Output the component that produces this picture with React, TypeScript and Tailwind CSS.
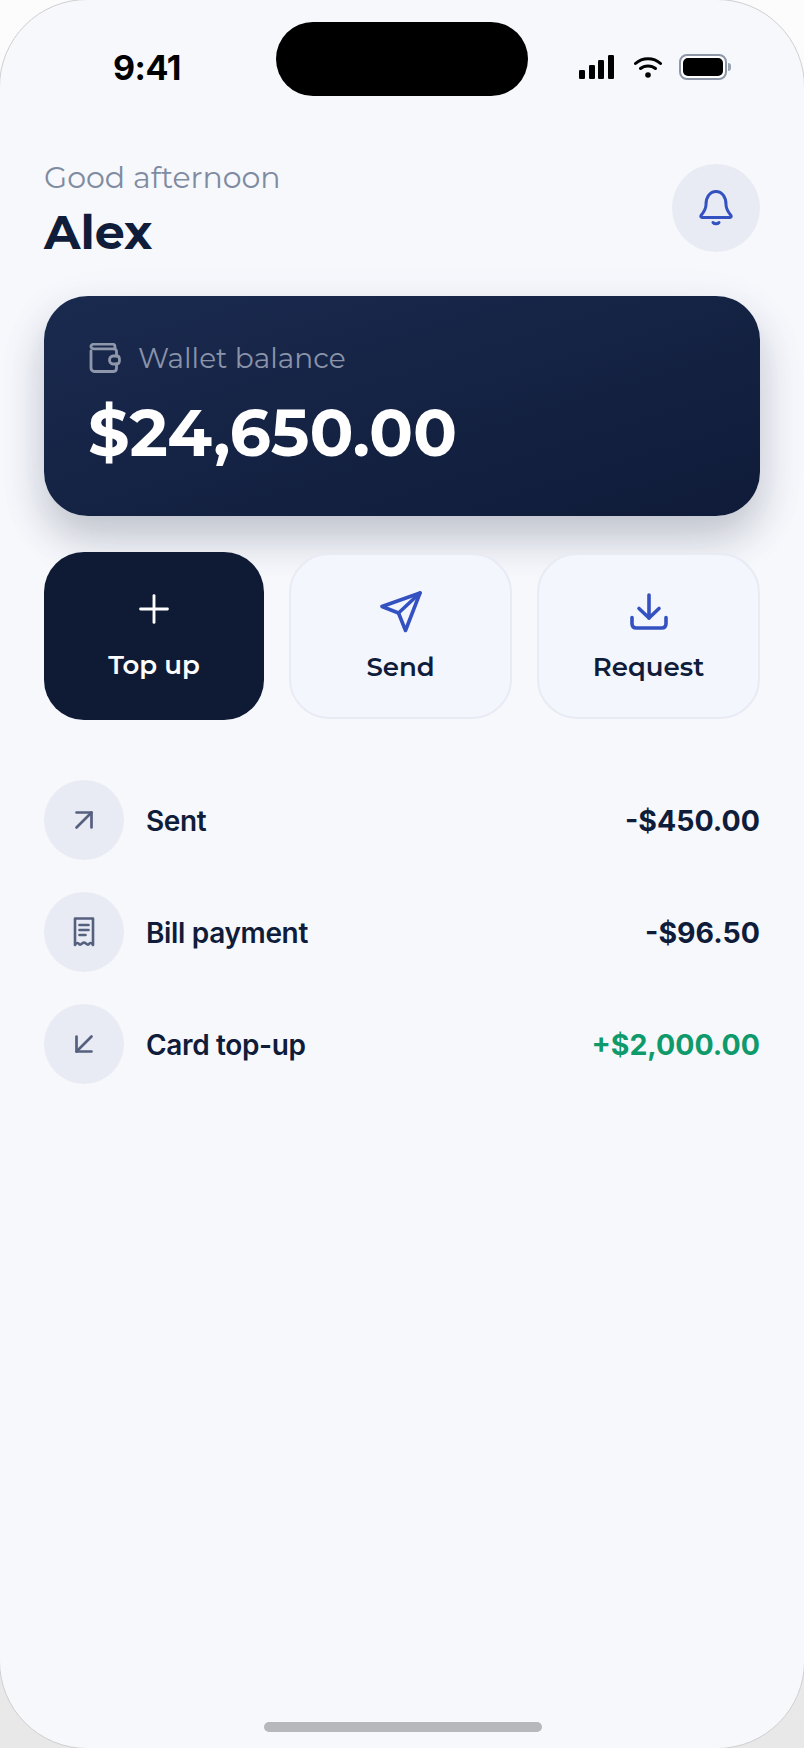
import { ArrowDownLeft, ArrowUpRight, Plus } from "lucide-react";
import type { ReactNode } from "react";

const display = "font-['Montserrat','Inter',sans-serif]";

function StatusIcons() {
  return (
    <div className="flex items-center pr-[29px]">
      <svg width="36" height="24" viewBox="0 0 36 24" className="mr-[19px]">
        <rect x="0" y="15" width="6" height="9" rx="1.2" />
        <rect x="10" y="10" width="6" height="14" rx="1.2" />
        <rect x="19" y="5" width="6" height="19" rx="1.2" />
        <rect x="29" y="0" width="6" height="24" rx="1.2" />
      </svg>
      <svg width="28" height="22" viewBox="0 0 28 22" fill="none" stroke="#000" strokeWidth="3" strokeLinecap="round" className="mr-[17px]">
        <path d="M1.5 7.5C8.5 1 19.5 1 26.5 7.5" />
        <path d="M6.5 12.5C10.5 9 17.5 9 21.5 12.5" />
        <circle cx="14" cy="19" r="2.8" fill="#000" stroke="none" />
      </svg>
      <div className="flex items-center">
        <div className="flex h-[26px] w-[48px] items-center justify-center rounded-[8px] border-2 border-[#8d97a7] bg-white">
          <div className="h-[18px] w-[40px] rounded-[5px] bg-black" />
        </div>
        <div className="ml-[1px] h-[8px] w-[3px] rounded-r-full bg-[#9aa3b1]" />
      </div>
    </div>
  );
}

function BellIcon() {
  return (
    <svg width="36" height="38" viewBox="0 0 36 38" fill="none" stroke="#3451c1" strokeWidth="3" strokeLinecap="round" strokeLinejoin="round">
      <path d="M8 15.5C8 8 12 2.5 18 2.5S28 8 28 15.5C28 20 30 23 33 26.5C33.6 27.5 33 28.5 32 28.5H4C3 28.5 2.4 27.5 3 26.5C6 23 8 20 8 15.5Z" />
      <path d="M15 33.5C16.5 35.3 19.5 35.3 21 33.5" />
    </svg>
  );
}

function WalletIcon() {
  return (
    <svg width="32" height="30" viewBox="0 0 32 30" fill="none" stroke="#8f97ab" strokeWidth="2.8" strokeLinecap="round" strokeLinejoin="round">
      <path d="M2 8V25C2 27 3.5 28.5 5.5 28.5H24.5C26.5 28.5 27.5 27 27.5 25V21" />
      <path d="M27.5 13V8.5C27.5 6.5 26 5.8 24.5 5.8H5C3 5.8 1.6 4.5 2 3C2.4 1.8 3.5 1.2 5 1.2H23.5C25 1.2 26 2 26 3.5V5.8" />
      <path d="M24 13H28C29.5 13 30.5 14.5 30.5 17S29.5 21 28 21H24C22 21 20.5 19 20.5 17S22 13 24 13Z" />
    </svg>
  );
}

function SendIcon() {
  return (
    <svg width="42" height="42" viewBox="0 0 42 42" fill="none" stroke="#3451c1" strokeWidth="3.6" strokeLinecap="round" strokeLinejoin="round">
      <path d="M40 2L2 15.5L18.5 22L25.5 39.5L40 2Z" />
      <path d="M40 2L18.5 22" />
    </svg>
  );
}

function RequestIcon() {
  return (
    <svg width="38" height="38" viewBox="0 0 38 38" fill="none" stroke="#3451c1" strokeWidth="3.6" strokeLinecap="round" strokeLinejoin="round">
      <path d="M19 2V25" />
      <path d="M9 15.5L19 25L29 15.5" />
      <path d="M2 24.5V30.5C2 33.5 3.5 35 6.5 35H31.5C34.5 35 36 33.5 36 30.5V24.5" />
    </svg>
  );
}

function ReceiptIcon() {
  return (
    <svg width="22" height="30" viewBox="0 0 22 30" fill="none" stroke="#55607f" strokeWidth="2.6" strokeLinecap="round" strokeLinejoin="round">
      <path d="M2 1.5H20V28C18.5 25.5 17 25.5 15.5 27.5C14 28.5 12.5 25.5 11 25.5C9.5 25.5 8 28.5 6.5 27.5C5 25.5 3.5 25.5 2 28V1.5Z" />
      <path d="M6.5 8H15.5" />
      <path d="M6.5 13H15.5" />
      <path d="M6.5 18H12.5" />
    </svg>
  );
}

function ActionButton({ label, icon, primary }: { label: string; icon: ReactNode; primary?: boolean }) {
  return (
    <button
      className={
        primary
          ? "flex h-[168px] w-[220px] flex-col items-center rounded-[40px] bg-[#0f1b35] pt-[41px] text-white"
          : "flex h-[166px] w-[223px] flex-col items-center rounded-[40px] border-2 border-[#e9ebf4] bg-[#f4f6fe] pt-[36px] text-[#0f1c3a]"
      }
    >
      <div className={primary ? "flex h-[32px] items-center" : "flex h-[42px] items-center"}>{icon}</div>
      <span className={`${display} ${primary ? "mt-[24px]" : "mt-[18px]"} text-[26px] leading-[32px] font-semibold`}>{label}</span>
    </button>
  );
}

function Row({ icon, label, amount, green }: { icon: ReactNode; label: string; amount: string; green?: boolean }) {
  return (
    <div className="flex items-center">
      <div className="flex h-[80px] w-[80px] items-center justify-center rounded-full bg-[#e9ebf4]">{icon}</div>
      <span className="ml-[22px] flex-1 pt-[2px] text-[28px] font-semibold tracking-[-0.35px] text-[#0f1c3a]">{label}</span>
      <span className={`pt-[2px] text-[28.5px] font-bold ${green ? "text-[#0f9a6c]" : "text-[#0f1c3a]"}`}>{amount}</span>
    </div>
  );
}

export default function App() {
  return (
    <div className="h-[1748px] w-[804px] overflow-hidden bg-gradient-to-b from-[#fcfcfc] to-[#e8e8e8] font-['Inter',sans-serif]">
      <div className="-m-[1px] flex h-[1750px] w-[806px] flex-col rounded-[88px] border border-[#cfcfd2] bg-[#f7f8fc] px-[44px]">
        {/* Status bar */}
        <div className="flex h-[96px] shrink-0 items-end">
          <div className="flex-1">
            <span className="mb-[8px] ml-[69px] block text-[34px] leading-[40px] font-bold tracking-[-0.5px] text-black">9:41</span>
          </div>
          <div className="h-[74px] w-[252px] rounded-full bg-black" />
          <div className="mb-[16px] flex flex-1 justify-end">
            <StatusIcons />
          </div>
        </div>

        {/* Greeting */}
        <div className="mt-[64px] flex items-start justify-between">
          <div>
            <p className={`${display} text-[30px] leading-[36px] text-[#7f8ba1]`}>Good afternoon</p>
            <p className={`${display} mt-[7px] text-[47.5px] leading-[58px] font-bold text-[#0f1c3a]`}>Alex</p>
          </div>
          <div className="mt-[4px] flex h-[88px] w-[88px] items-center justify-center rounded-full bg-[#e9ebf4]">
            <BellIcon />
          </div>
        </div>

        {/* Balance card */}
        <div className="mt-[35px] h-[220px] shrink-0 rounded-[44px] bg-gradient-to-br from-[#1a2a4f] to-[#0f1b38] px-[45px] pt-[45px] shadow-[0_22px_40px_rgba(10,15,30,0.2),0_16px_60px_rgba(50,80,190,0.06)]">
          <div className="flex items-center">
            <WalletIcon />
            <span className={`${display} ml-[17px] text-[28px] leading-[34px] text-[#8a93a8]`}>Wallet balance</span>
          </div>
          <p className={`${display} mt-[17px] -ml-[1px] text-[65px] leading-[82px] font-bold text-white`}>$24,650.00</p>
        </div>

        {/* Actions */}
        <div className="mt-[36px] flex items-center justify-between">
          <ActionButton primary label="Top up" icon={<Plus size={46} strokeWidth={1.5} />} />
          <ActionButton label="Send" icon={<SendIcon />} />
          <ActionButton label="Request" icon={<RequestIcon />} />
        </div>

        {/* Activity */}
        <div className="mt-[60px] flex flex-col gap-[32px]">
          <Row icon={<ArrowUpRight size={36} strokeWidth={1.8} color="#55607f" />} label="Sent" amount="-$450.00" />
          <Row icon={<ReceiptIcon />} label="Bill payment" amount="-$96.50" />
          <Row icon={<ArrowDownLeft size={36} strokeWidth={1.8} color="#55607f" />} label="Card top-up" amount="+$2,000.00" green />
        </div>

        {/* Home indicator */}
        <div className="mt-auto mb-[16px] ml-[220px] h-[10px] w-[278px] rounded-full bg-[#b7b8bc]" />
      </div>
    </div>
  );
}
